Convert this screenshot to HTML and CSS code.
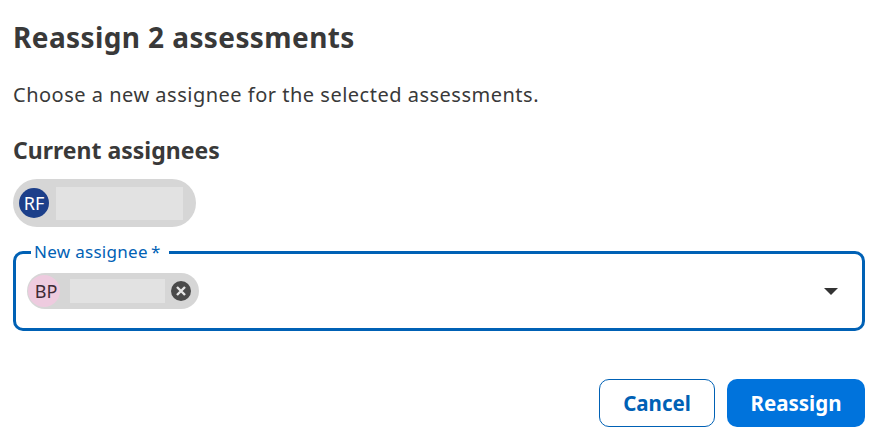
FILE: index.html
```html
<!DOCTYPE html>
<html lang="en">
<head>
<meta charset="UTF-8">
<title>Reassign assessments</title>
<link rel="stylesheet" href="styles.css">
</head>
<body>

<div class="dialog">
  <h1 class="title">Reassign 2 assessments</h1>
  <p class="intro">Choose a new assignee for the selected assessments.</p>
  <h2 class="subtitle">Current assignees</h2>

  <div class="chip chip-current">
    <span class="avatar avatar-rf">RF</span>
    <span class="redacted redacted-current"></span>
  </div>

  <fieldset class="field">
    <legend class="field-label">New assignee<span class="required">*</span></legend>
    <div class="chip chip-new">
      <span class="avatar avatar-bp">BP</span>
      <span class="redacted redacted-new"></span>
      <svg class="chip-clear" width="20" height="20" viewBox="0 0 20 20">
        <circle cx="10" cy="10" r="10" fill="#4a4a4a"/>
        <path d="M6 6l8 8M14 6l-8 8" stroke="#e6e6e6" stroke-width="2.4" fill="none"/>
      </svg>
    </div>
    <svg class="caret" width="14" height="7" viewBox="0 0 14 7">
      <path d="M0 0h14L7 7z" fill="#333"/>
    </svg>
  </fieldset>

  <div class="actions">
    <button class="btn btn-cancel">Cancel</button>
    <button class="btn btn-primary">Reassign</button>
  </div>
</div>

</body>
</html>
```

FILE: styles.css
```css
body {
  margin: 0;
  background-color: #fff;
  color: #393939;
  font-family: 'Noto Sans', sans-serif;
}
.dialog {
  width: 852px;
  padding: 0 15px 0 13px;
}
.title {
  margin: 0;
  padding-top: 20px;
  font-size: 28px;
  line-height: 34px;
  font-weight: 700;
  letter-spacing: 0.4px;
}
.intro {
  margin: 0;
  padding-top: 28px;
  font-size: 20px;
  line-height: 26px;
  letter-spacing: 0.5px;
}
.subtitle {
  margin: 0;
  padding-top: 28px;
  font-size: 23px;
  line-height: 28px;
  font-weight: 700;
}
.chip {
  display: flex;
  align-items: center;
  background-color: #d6d6d6;
}
.chip-current {
  width: 183px;
  height: 48px;
  margin-top: 15px;
  border-radius: 24px;
  box-sizing: border-box;
  padding-left: 6px;
}
.chip-new {
  width: 172px;
  height: 36px;
  border-radius: 18px;
  box-sizing: border-box;
  padding-left: 1px;
}
.avatar {
  display: flex;
  align-items: center;
  justify-content: center;
  border-radius: 50%;
  flex-shrink: 0;
}
.avatar-rf {
  width: 30px;
  height: 30px;
  background-color: #1c3f8a;
  color: #fff;
  font-size: 18px;
}
.avatar-bp {
  box-sizing: border-box;
  width: 32px;
  height: 32px;
  padding-left: 4px;
  background-color: #eecbdf;
  color: #3d2a35;
  font-size: 18px;
}
.redacted {
  display: block;
  background-color: #e2e2e2;
}
.redacted-current {
  width: 127px;
  height: 33px;
  margin-left: 7px;
}
.redacted-new {
  width: 95px;
  height: 24px;
  margin-left: 10px;
}
.chip-clear {
  margin-left: 6px;
}
.field {
  display: flex;
  align-items: center;
  justify-content: space-between;
  box-sizing: border-box;
  width: 852px;
  height: 90px;
  margin: 14px 0 0;
  padding: 0 24px 10px 11px;
  border: 3px solid #0061b5;
  border-radius: 10px;
  min-width: 0;
}
.field-label {
  margin-left: 4px;
  padding: 0 8px 2px 3px;
  color: #0061b5;
  font-size: 17px;
  line-height: 21px;
  letter-spacing: 0.3px;
}
.required {
  margin-left: 3px;
}
.caret {
  flex-shrink: 0;
}
.actions {
  display: flex;
  justify-content: flex-end;
  gap: 12px;
  margin-top: 48px;
}
.btn {
  height: 48px;
  border-radius: 10px;
  font-family: 'Noto Sans', sans-serif;
  font-size: 20.5px;
  font-weight: 700;
  cursor: pointer;
}
.btn-cancel {
  width: 116px;
  background-color: #fff;
  border: 1px solid #0061b5;
  color: #0061b5;
}
.btn-primary {
  width: 138px;
  background-color: #0073dc;
  border: none;
  color: #fff;
}
```
